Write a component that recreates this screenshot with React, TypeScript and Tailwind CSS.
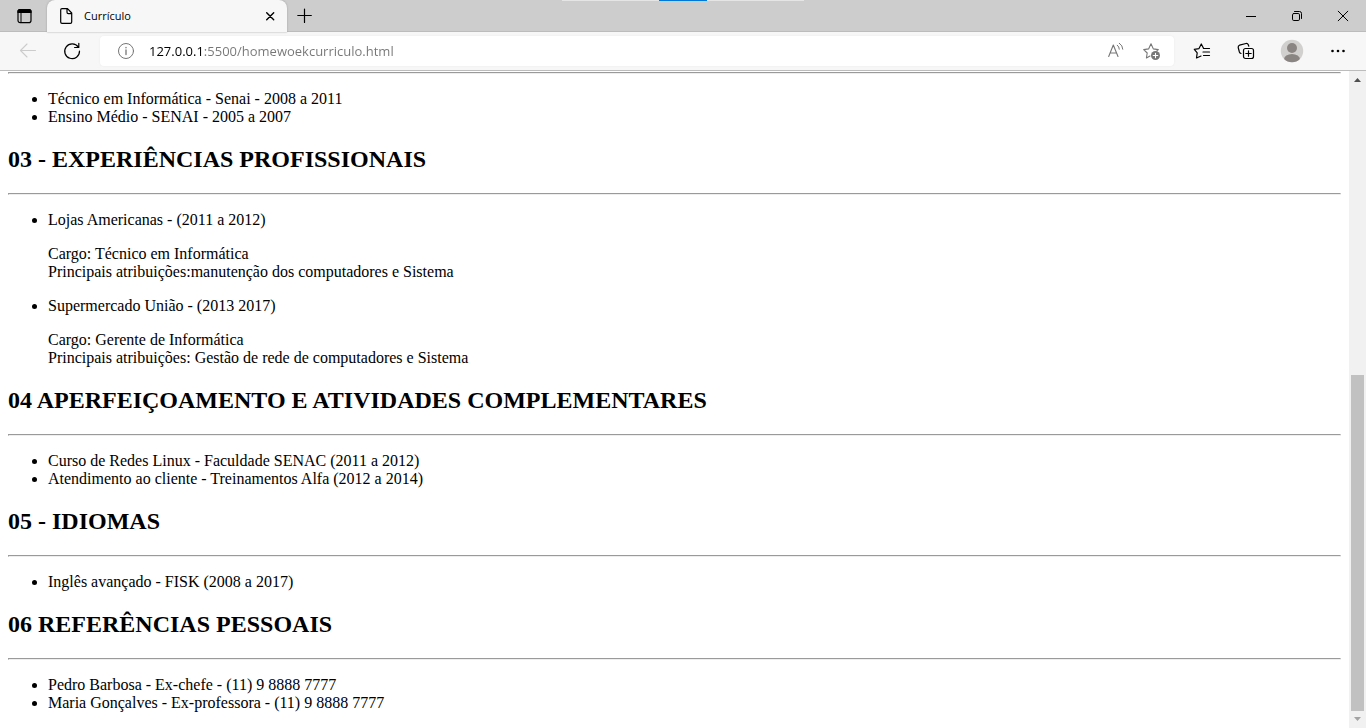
import type { ReactNode } from 'react';

type IconProps = { children: ReactNode; size?: number; className?: string };

function Icon({ children, size = 20, className = '' }: IconProps) {
  return (
    <svg
      width={size}
      height={size}
      viewBox={`0 0 ${size} ${size}`}
      fill="none"
      stroke="currentColor"
      strokeLinecap="round"
      strokeLinejoin="round"
      className={className}
      aria-hidden="true"
    >
      {children}
    </svg>
  );
}

function TitleBar() {
  const windowButton = 'flex h-8 w-[46px] items-center justify-center';
  return (
    <header className="relative flex h-8 shrink-0 bg-[#cdcdcd] text-black shadow-[inset_0_-1px_0_#bcbcbc]">
      <button aria-label="Menu de ações de guia" className="flex w-[47px] items-center justify-center">
        <Icon>
          <rect x="4" y="3.600" width="13" height="13" rx="2.200" strokeWidth="1.200" />
          <path d="M4 6.500V5.500Q4 3.600 6 3.600h9q2 0 2 1.900v1z" fill="currentColor" strokeWidth="1.200" />
          <path d="M7 7v9.500" strokeWidth="1" />
        </Icon>
      </button>
      <div className="relative flex w-60 items-center rounded-t-lg bg-[#f7f7f7] pr-[7px] pl-3 shadow-[0_0_2px_#999999]">
        <Icon size={16} className="shrink-0">
          <path d="M3 .7h5.500L12.700 5V14q0 1.300-1.300 1.300H3q-1.300 0-1.300-1.300V2Q1.700.7 3 .7zM8 .9V4.300q0 1.300 1.300 1.300h3.200" strokeWidth="1.200" />
        </Icon>
        <span className="ml-[9px] flex-1 font-['Open_Sans','Noto_Sans',sans-serif] text-[11px]">Currículo</span>
        <button aria-label="Fechar guia" className="flex h-5 w-5 items-center justify-center">
          <Icon size={16}>
            <path d="M4.700 4.700l7 7M11.700 4.700l-7 7" strokeWidth="1.400" />
          </Icon>
        </button>
      </div>
      <button aria-label="Nova guia" className="flex w-9 items-center justify-center">
        <Icon>
          <path d="M9.500 3v13.500M2.800 9.500h13.500" strokeWidth="1.200" />
        </Icon>
      </button>
      <div className="absolute top-0 left-1/2 flex h-px w-[242px] -translate-x-1/2 justify-center bg-[#e5e5e5]">
        <div className="h-px w-12 bg-[#0078d7]" />
      </div>
      <div className="ml-auto flex">
        <button aria-label="Minimizar" className={windowButton}>
          <Icon>
            <path d="M5 10.500h10" strokeLinecap="butt" strokeWidth="1" />
          </Icon>
        </button>
        <button aria-label="Restaurar" className={windowButton}>
          <Icon>
            <rect x="5.500" y="7.500" width="7" height="7" rx="1.300" strokeWidth="1" />
            <path d="M7.500 5.500h5q2 0 2 2v5" strokeWidth="1" />
          </Icon>
        </button>
        <button aria-label="Fechar" className={windowButton}>
          <Icon>
            <path d="M5.200 5.200l9.600 9.600M14.800 5.200l-9.600 9.600" strokeWidth="1" />
          </Icon>
        </button>
      </div>
    </header>
  );
}

function Toolbar() {
  const wide = 'flex h-8 w-11 items-center justify-center';
  const right = 'flex h-8 w-[46px] items-center justify-center';
  return (
    <nav className="flex h-[39px] shrink-0 items-center border-b border-[#bcbcbc] bg-[#f7f7f7] pr-[5px] pl-[6px] text-black">
      <button aria-label="Voltar" className={`${wide} text-[#cccccc]`}>
        <Icon>
          <path d="M17.500 9.500h-15M9 3L2.500 9.500 9 16" strokeWidth="1.100" />
        </Icon>
      </button>
      <button aria-label="Atualizar" className={wide}>
        <Icon>
          <path d="M16.300 6.200A7.400 7.400 0 1 0 17.500 10M16.800 2.300v4.200h-4.200" strokeWidth="1.200" />
        </Icon>
      </button>
      <div className="mr-[3px] ml-[6px] flex h-[30px] min-w-0 flex-1 items-center rounded-[4px] bg-white pl-4 shadow-[0_0_2px_#e8e8e8]">
        <Icon className="shrink-0 text-[#767676]">
          <circle cx="10" cy="10" r="7.500" strokeWidth="1" />
          <path d="M10 9v4.500M10 6.300v.5" strokeWidth="1.300" />
        </Icon>
        <input
          aria-label="Barra de endereço"
          defaultValue="127.0.0.1:5500/homewoekcurriculo.html"
          spellCheck={false}
          className="ml-[13px] h-6 min-w-0 flex-1 bg-[linear-gradient(to_right,#000000_54px,#767676_54px)] bg-clip-text font-['Open_Sans','Noto_Sans',sans-serif] text-[13px] text-transparent caret-black outline-none"
        />
        <button aria-label="Ler em voz alta" className="flex h-7 w-9 items-center justify-center text-[#767676]">
          <Icon>
            <path d="M2.700 15.500L7.300 4 12 15.500M4.200 12h6.300" strokeWidth="1.100" />
            <path d="M11.300 4.200q2 1.500 2 4M13.300 2.200q3.500 2.300 3.500 6" strokeWidth="1" />
          </Icon>
        </button>
        <button aria-label="Adicionar aos favoritos" className="mr-1 flex h-7 w-9 items-center justify-center text-[#767676]">
          <Icon>
            <path d="M8 15L4.400 17l.8-5L1.700 8.600l4.900-.7L9 2.700l2.300 5.200 5 .7-1.600 1.600" strokeWidth="1.100" />
            <circle cx="13.500" cy="14.500" r="4.500" fill="currentColor" stroke="none" />
            <path d="M13.500 12.200v4.600M11.200 14.500h4.600" stroke="white" strokeWidth="1.100" />
          </Icon>
        </button>
      </div>
      <button aria-label="Favoritos" className={right}>
        <Icon size={22}>
          <path d="M12 16l-4.500 2 .7-5.200L5.300 9.300l4.700-.7L12.300 4l2.200 4.200" strokeWidth="1.200" />
          <path d="M14.500 8.500h6M14 12h6.500M14.500 15.500h6" strokeWidth="1.200" />
        </Icon>
      </button>
      <button aria-label="Coleções" className={right}>
        <Icon>
          <rect x="7.500" y="7.500" width="10" height="10" rx="2" strokeWidth="1.200" />
          <path d="M12.500 9.800v5.400M9.800 12.500h5.400" strokeWidth="1.200" />
          <path d="M5 12.500q-1.200-.3-1.600-1.500L2.200 6.500Q2 4.800 3.500 4.200L10 2.500q1.700-.2 2.300 1.200l.5 1.500" strokeWidth="1.200" />
        </Icon>
      </button>
      <button aria-label="Perfil" className={right}>
        <svg width="24" height="24" viewBox="0 0 24 24" aria-hidden="true">
          <defs>
            <clipPath id="avatar">
              <circle cx="12" cy="12" r="11.200" />
            </clipPath>
          </defs>
          <g clipPath="url(#avatar)">
            <rect width="24" height="24" fill="#d2d0ce" />
            <circle cx="12" cy="9" r="5" fill="#8a8583" />
            <ellipse cx="12" cy="20.500" rx="8" ry="5.500" fill="#8a8583" />
          </g>
        </svg>
      </button>
      <button aria-label="Configurações e mais" className={right}>
        <Icon>
          <g fill="currentColor" stroke="none">
            <circle cx="4.500" cy="10" r="1.300" />
            <circle cx="10" cy="10" r="1.300" />
            <circle cx="15.500" cy="10" r="1.300" />
          </g>
        </Icon>
      </button>
    </nav>
  );
}

function Rule() {
  return <hr className="border border-t-[#9a9a9a] border-r-[#eeeeee] border-b-[#eeeeee] border-l-[#9a9a9a]" />;
}

function Section({ title, children }: { title?: string; children: ReactNode }) {
  return (
    <section>
      {title && <h2 className="mt-5 mb-5 text-2xl leading-[27px] font-bold">{title}</h2>}
      <Rule />
      <ul className="mt-4 list-disc pl-10">{children}</ul>
    </section>
  );
}

function Scrollbar() {
  return (
    <div className="flex w-[17px] shrink-0 flex-col bg-[#f1f1f1]" aria-hidden="true">
      <svg width="17" height="17" viewBox="0 0 17 17">
        <path d="M5 11h7L8.500 7z" fill="#505050" />
      </svg>
      <div className="grow-[287]" />
      <div className="mx-[2px] grow-[336] bg-[#c1c1c1]" />
      <svg width="17" height="17" viewBox="0 0 17 17">
        <path d="M5 6h7L8.500 10z" fill="#a3a3a3" />
      </svg>
    </div>
  );
}

export default function App() {
  return (
    <div className="flex h-screen flex-col overflow-hidden bg-white">
      <TitleBar />
      <Toolbar />
      <div className="flex min-h-0 flex-1">
        <main className="min-w-0 flex-1 overflow-hidden px-2 pt-px font-['Liberation_Serif','Times_New_Roman',serif] text-base leading-[18px] text-black">
          <Section>
            <li>Técnico em Informática - Senai - 2008 a 2011</li>
            <li>Ensino Médio - SENAI - 2005 a 2007</li>
          </Section>
          <Section title="03 - EXPERIÊNCIAS PROFISSIONAIS">
            <li>
              Lojas Americanas - (2011 a 2012)
              <p className="my-4">
                Cargo: Técnico em Informática
                <br />
                Principais atribuições:manutenção dos computadores e Sistema
              </p>
            </li>
            <li>
              Supermercado União - (2013 2017)
              <p className="mt-4">
                Cargo: Gerente de Informática
                <br />
                Principais atribuições: Gestão de rede de computadores e Sistema
              </p>
            </li>
          </Section>
          <Section title="04 APERFEIÇOAMENTO E ATIVIDADES COMPLEMENTARES">
            <li>Curso de Redes Linux - Faculdade SENAC (2011 a 2012)</li>
            <li>Atendimento ao cliente - Treinamentos Alfa (2012 a 2014)</li>
          </Section>
          <Section title="05 - IDIOMAS">
            <li>Inglês avançado - FISK (2008 a 2017)</li>
          </Section>
          <Section title="06 REFERÊNCIAS PESSOAIS">
            <li>Pedro Barbosa - Ex-chefe - (11) 9 8888 7777</li>
            <li>Maria Gonçalves - Ex-professora - (11) 9 8888 7777</li>
          </Section>
        </main>
        <Scrollbar />
      </div>
    </div>
  );
}
